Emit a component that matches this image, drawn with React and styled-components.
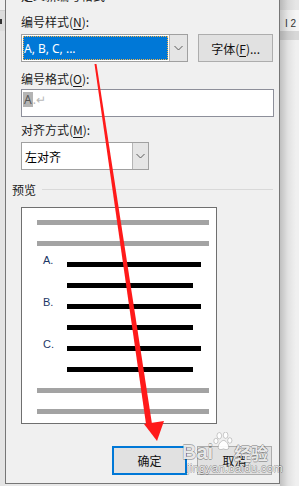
import React from 'react';
import styled, { createGlobalStyle } from 'styled-components';

const Global = createGlobalStyle`
  html, body { margin: 0; padding: 0; }
  body {
    width: 299px; height: 486px; overflow: hidden; background: #e8e8e8;
    font-family: "Noto Sans", "Noto Sans CJK SC", sans-serif;
  }
`;

const Page = styled.div`
  position: relative;
  width: 299px;
  height: 486px;
  display: flex;
  overflow: hidden;
  background: #e8e8e8;
`;

const Strip = styled.div`
  width: ${p => p.$w}px;
  display: flex;
  flex-direction: column;
  position: relative;
  overflow: hidden;
  ${p => p.$shadow && `
    &::after {
      content: '';
      position: absolute; inset: 0;
      background: linear-gradient(to right, rgba(0,0,0,0.2), rgba(0,0,0,0.06) 8px, rgba(0,0,0,0) 16px);
      pointer-events: none;
    }
  `}
`;

const Band = styled.div`
  height: ${p => (p.$h ? `${p.$h}px` : 'auto')};
  flex: ${p => (p.$grow ? 1 : 'none')};
  background: ${p => p.$bg};
  display: flex;
  align-items: center;
`;

const Tick = styled.div`
  width: 2px;
  height: 5px;
  margin-top: 1px;
  background: #333;
`;

const RulerText = styled.span`
  font-family: "Liberation Sans", sans-serif;
  font-size: 10px;
  color: #333;
  white-space: nowrap;
  padding-left: 5px;
  margin-top: 5px;
`;

const Dialog = styled.div`
  width: 275px;
  height: 484px;
  box-sizing: border-box;
  border-left: 1px solid #767676;
  border-right: 1px solid #767676;
  border-bottom: 1px solid #767676;
  background: #f0f0f0;
  display: flex;
  flex-direction: column;
  padding: 0 6px 0 15px;
  font-size: 12px;
  color: #000;
`;

const TitleClip = styled.div`
  height: 3px;
  overflow: hidden;
`;

const TitleText = styled.div`
  font-family: "Noto Sans CJK SC", sans-serif;
  font-size: 12px;
  line-height: 12px;
  margin-top: -10px;
  color: #222;
`;

const Label = styled.div`
  font-family: "Noto Sans CJK SC", sans-serif;
  font-size: 12px;
  line-height: 16px;
  height: 16px;
  margin-top: ${p => p.$mt}px;
  margin-bottom: ${p => p.$mb}px;
  color: #1a1a1a;
  white-space: nowrap;
  u { text-decoration-thickness: 1px; text-underline-offset: 2px; }
`;

const Row = styled.div`
  display: flex;
  align-items: center;
  gap: 10px;
`;

const Select = styled.div`
  display: flex;
  width: ${p => p.$w}px;
  height: ${p => p.$h}px;
  box-sizing: border-box;
  border: 1px solid #a0a0a0;
  background: #fff;
`;

const SelectValue = styled.div`
  flex: 1;
  display: flex;
  padding: 1px;
`;

const Highlight = styled.div`
  flex: 1;
  background: #0078d7;
  color: #fff;
  outline: 1px dotted #f2b24a;
  outline-offset: -1px;
  font-family: "Noto Sans", sans-serif;
  font-size: 12px;
  display: flex;
  align-items: center;
  padding-left: 1px;
  white-space: nowrap;
`;

const PlainValue = styled.div`
  flex: 1;
  font-family: "Noto Sans CJK SC", sans-serif;
  font-size: 12px;
  display: flex;
  align-items: center;
  padding-left: 3px;
  color: #000;
`;

const DropBtn = styled.div`
  width: ${p => p.$w}px;
  background: #e5e5e5;
  border-left: 1px solid #b5b5b5;
  display: flex;
  align-items: center;
  justify-content: center;
`;

const Button = styled.div`
  width: 75px;
  height: ${p => p.$h || 29}px;
  box-sizing: border-box;
  background: #e1e1e1;
  border: ${p => (p.$primary ? '2px solid #0078d7' : '1px solid #adadad')};
  display: flex;
  align-items: center;
  justify-content: center;
  font-family: "Noto Sans CJK SC", sans-serif;
  font-size: 12px;
  color: #111;
  white-space: nowrap;
  u { text-decoration-thickness: 1px; text-underline-offset: 2px; }
`;

const TextInput = styled.div`
  width: 253px;
  height: 28px;
  box-sizing: border-box;
  border: 1px solid #8d8f9a;
  background: #fff;
  display: flex;
  align-items: flex-start;
  padding: 2px 0 0 1px;
  font-family: "Noto Sans", sans-serif;
  font-size: 12px;
`;

const Sel = styled.span`
  background: #b4b4b4;
  color: #555;
  line-height: 15px;
  padding: 0 1px;
`;

const Faint = styled.span`
  color: #b8b8b8;
  line-height: 15px;
`;

const GroupHeader = styled.div`
  display: flex;
  align-items: center;
  gap: 6px;
  margin-left: -9px;
  margin-top: 11px;
  height: 16px;
  font-family: "Noto Sans CJK SC", sans-serif;
  font-size: 12px;
  color: #1a1a1a;
`;

const Rule = styled.div`
  flex: 1;
  height: 1px;
  background: #d9d9d9;
`;

const PreviewBox = styled.div`
  width: 196px;
  height: 217px;
  box-sizing: border-box;
  margin-top: 10px;
  border: 1px solid #6f6f6f;
  background: #fff;
  display: flex;
  flex-direction: column;
  gap: 16px;
  padding-top: 12px;
`;

const PLine = styled.div`
  display: flex;
  height: 5px;
  padding-left: ${p => p.$indent}px;
`;

const Bar = styled.div`
  height: 5px;
  width: ${p => p.$w}px;
  background: ${p => (p.$gray ? '#a3a3a3' : '#000')};
`;

const Num = styled.div`
  width: 24px;
  height: 5px;
  font-family: "Liberation Sans", sans-serif;
  font-size: 11px;
  line-height: 11px;
  margin-top: -7px;
  color: #1c3766;
`;

const Footer = styled.div`
  display: flex;
  justify-content: flex-end;
  gap: 10px;
  margin-top: 22px;
  padding-right: 1px;
`;

const Overlay = styled.svg`
  position: absolute;
  left: 0;
  top: 0;
  pointer-events: none;
`;

const outline = `
  text-shadow: 0.6px 0 0 rgba(0,0,0,0.28), -0.6px 0 0 rgba(0,0,0,0.28),
    0 0.6px 0 rgba(0,0,0,0.28), 0 -0.6px 0 rgba(0,0,0,0.28);
`;

const Watermark = styled.div`
  position: absolute;
  left: 182px;
  top: 432px;
  width: 95px;
  display: flex;
  flex-direction: column;
  align-items: flex-start;
  pointer-events: none;
  color: rgba(255, 255, 255, 0.9);
  ${outline}
`;

const WmTop = styled.div`
  display: flex;
  align-items: flex-end;
  height: 29px;
`;

const WmBai = styled.span`
  font-family: "Liberation Sans", sans-serif;
  font-weight: bold;
  font-size: 20px;
  line-height: 17px;
`;

const WmJing = styled.span`
  font-family: "Noto Sans CJK SC", sans-serif;
  font-weight: bold;
  font-size: 17px;
  line-height: 17px;
`;

const WmUrl = styled.div`
  font-family: "Liberation Sans", sans-serif;
  font-size: 11.5px;
  line-height: 12px;
  margin-left: 5px;
  margin-top: 1px;
  letter-spacing: 0.2px;
`;

const Chevron = () => (
  <svg width="9" height="6" viewBox="0 0 9 6">
    <path d="M0.5 1 L4.5 5 L8.5 1" fill="none" stroke="#5a5a5a" strokeWidth="1" />
  </svg>
);

const Paw = () => (
  <svg width="21" height="19" viewBox="0 0 20 18" style={{ marginBottom: 10 }}>
    <g fill="rgba(255,255,255,0.92)" stroke="rgba(0,0,0,0.3)" strokeWidth="0.6">
      <ellipse cx="6" cy="3.5" rx="2.2" ry="3" />
      <ellipse cx="12" cy="3" rx="2.2" ry="3" />
      <ellipse cx="2.8" cy="8.5" rx="2" ry="2.6" />
      <ellipse cx="16" cy="8" rx="2" ry="2.6" />
      <path d="M5 15 C5 10 9 8 10 8 C12 8 15 11 15 15 C15 17 12 17 10 16 C8 17 5 17 5 15 Z" />
    </g>
  </svg>
);

const lines = [
  { gray: true },
  { gray: true },
  { num: 'A.', w: 134 },
  { w: 126 },
  { num: 'B.', w: 134 },
  { w: 126 },
  { num: 'C.', w: 134 },
  { w: 126 },
  { gray: true },
  { gray: true },
];

export default function App() {
  return (
    <>
      <Global />
      <Page>
        <Strip $w={5}>
          <Band $h={10} $bg="#efefef" />
          <Band $h={1} $bg="#cfcfcf" />
          <Band $h={20} $bg="#dcdcdc"><Tick /></Band>
          <Band $grow $bg="#e4e4e4" />
        </Strip>
        <Dialog>
          <TitleClip><TitleText>定义新编号格式</TitleText></TitleClip>
          <Label $mt={11} $mb={4}>编号样式(<u>N</u>):</Label>
          <Row>
            <Select $w={168} $h={28}>
              <SelectValue><Highlight>A, B, C, ...</Highlight></SelectValue>
              <DropBtn $w={17}><Chevron /></DropBtn>
            </Select>
            <Button $h={28}>字体(<u>F</u>)...</Button>
          </Row>
          <Label $mt={9} $mb={2}>编号格式(<u>O</u>):</Label>
          <TextInput><Sel>A</Sel><Faint>.↵</Faint></TextInput>
          <Label $mt={5} $mb={4}>对齐方式(<u>M</u>):</Label>
          <Select $w={128} $h={28}>
            <PlainValue>左对齐</PlainValue>
            <DropBtn $w={15}><Chevron /></DropBtn>
          </Select>
          <GroupHeader>预览<Rule /></GroupHeader>
          <PreviewBox>
            {lines.map((l, i) =>
              l.gray ? (
                <PLine key={i} $indent={15}><Bar $gray $w={172} /></PLine>
              ) : (
                <PLine key={i} $indent={21}>
                  <Num>{l.num || ''}</Num>
                  <Bar $w={l.w} />
                </PLine>
              )
            )}
          </PreviewBox>
          <Footer>
            <Button $primary>确定</Button>
            <Button>取消</Button>
          </Footer>
        </Dialog>
        <Strip $w={19} $shadow>
          <Band $h={10} $bg="#e6e6e6" />
          <Band $h={21} $bg="#f5f5f5"><RulerText>I 2</RulerText></Band>
          <Band $h={9} $bg="#d8d8d8" />
          <Band $grow $bg="#f0f0f0" />
        </Strip>
        <Watermark>
          <WmTop>
            <WmBai>Bai</WmBai>
            <Paw />
            <WmJing>经验</WmJing>
          </WmTop>
          <WmUrl>jingyan.baidu.com</WmUrl>
        </Watermark>
        <Overlay width="299" height="486" viewBox="0 0 299 486">
          <polygon points="94.5,64 96.5,64 152,424 146,424" fill="#ff1a1a" />
          <polygon points="144,424 164,421 157,441" fill="#ff1a1a" />
        </Overlay>
      </Page>
    </>
  );
}
